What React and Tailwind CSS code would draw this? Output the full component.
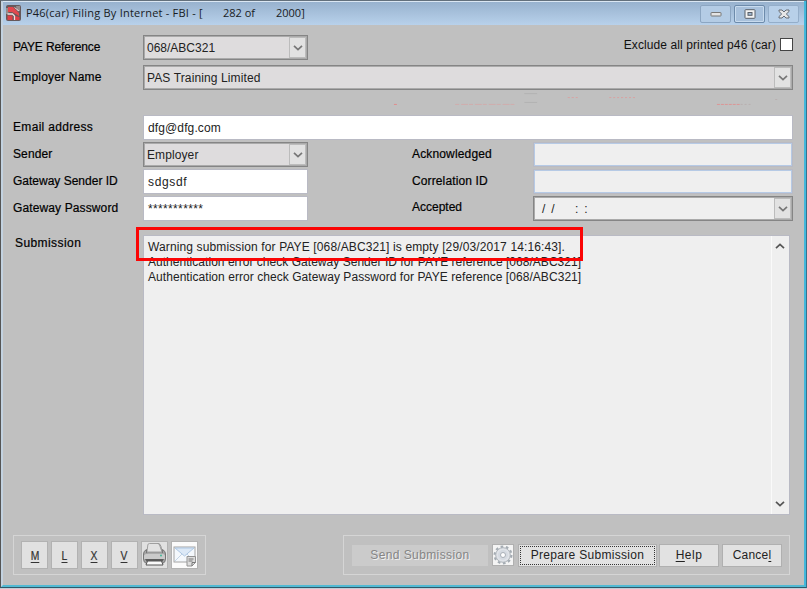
function Chevron({ className = '' }) {
    return (
        <svg className={className} width="10" height="6" viewBox="0 0 10 6" fill="none">
            <path d="M1 .8 5 4.6 9 .8" stroke="currentColor" strokeWidth="1.7" />
        </svg>
    );
}

function Label({ children, className = '' }) {
    return <span className={`block whitespace-nowrap text-[12px] leading-[14px] text-black [-webkit-text-stroke:0.2px_black] ${className}`}>{children}</span>;
}

function Combo({ children, className = '' }) {
    return (
        <div className={`flex h-[25px] items-center justify-between border border-[#858585] pl-[3px] pr-px shadow-[inset_0_0_0_1px_#aaa] ${className}`}>
            <span className="whitespace-pre text-[12px] leading-[14px] text-[#222]">{children}</span>
            <span className="flex h-[21px] w-[17px] items-center justify-center border border-[#bcbcbc] bg-[#e2e2e2] text-[#777]">
                <Chevron />
            </span>
        </div>
    );
}

function Field({ children, className = '' }) {
    return <div className={`flex items-center border border-[#b9bac4] pl-1 text-[12px] leading-[14px] text-[#222] ${className}`}>{children}</div>;
}

function TitleBar() {
    return (
        <header className="flex h-[24px] items-start justify-between border-t border-[#dbe7f3] bg-linear-to-b from-[#98b2ce] to-[#b8d1eb] pl-[3px] pr-[5px]">
            <div className="flex items-center gap-[5px] pt-[3px]">
                <svg width="15" height="16" viewBox="0 0 15 16">
                    <rect width="15" height="16" rx="2" fill="#66585a" />
                    <path d="M0 3h2.500v6H0zM10 1h4v5h-3z" fill="#958c8c" />
                    <path d="M2 2h5l6 6v3L6 7H2z" fill="#e0484e" />
                    <path d="M1.500 10.500h5V15h-5zM9 11l4.500 1v3H9z" fill="#dc3f46" />
                    <path d="M1.500 9h5l2 2v4" stroke="#efdede" strokeWidth="1.300" fill="none" />
                    <path d="M8.500 2.500 13 6" stroke="#e6d2d2" />
                </svg>
                <h1 className="whitespace-pre font-['Open_Sans','Noto_Sans',sans-serif] text-[11px] leading-[16px] text-[#181c24]">
                    <span className="inline-block w-[197px] tracking-[0.22px]">P46(car) Filing By Internet - FBI - [</span>
                    <span className="inline-block w-[53px]">282 of</span>
                    <span>2000]</span>
                </h1>
            </div>
            <div className="flex gap-[3px] pt-[3px]">
                <span className="flex h-[18px] w-[31px] items-center justify-center rounded-[2px] border border-[#8ca6c2] bg-[#b4cce5]">
                    <svg width="12" height="6" viewBox="0 0 12 6"><rect x="1" y="1.5" width="10" height="3.5" rx=".5" fill="#e4e4e4" stroke="#777" /></svg>
                </span>
                <span className="flex h-[18px] w-[31px] items-center justify-center rounded-[2px] border border-[#6d8bab] bg-[#a8c1dc] shadow-[inset_0_0_0_1px_#c8dbee]">
                    <svg width="12" height="10" viewBox="0 0 12 10"><rect x="1" y=".7" width="10" height="8.6" rx=".7" fill="#f3f3f3" stroke="#5b6068" /><rect x="4" y="3.5" width="4" height="2.8" fill="#9fb8d3" stroke="#5b6068" /></svg>
                </span>
                <span className="flex h-[18px] w-[31px] items-center justify-center rounded-[2px] border border-[#94aeca] bg-[#b8d0e9]">
                    <svg width="12" height="10" viewBox="0 0 12 10"><path d="M1 1h3l2 2 2-2h3v1.5L8.3 5 11 7.5V9H8L6 7 4 9H1V7.5L3.7 5 1 2.5z" fill="#e6e6e6" stroke="#666c74" /></svg>
                </span>
            </div>
        </header>
    );
}

function ToolButton({ children }) {
    return (
        <button className="flex h-[28px] w-[27px] items-center justify-center border border-[#b2b2b2] bg-[#e1e1e1] text-[12px] leading-[12px] text-[#333]">
            {children}
        </button>
    );
}

function KeyLetter({ children }) {
    return <span className="mt-[2px] inline-block scale-x-[.86] border-b border-[#333] leading-[12px] [-webkit-text-stroke:0.2px_#333]">{children}</span>;
}

function PrinterIcon() {
    return (
        <svg className="-mt-[2px] shrink-0" width="25" height="25" viewBox="0 0 25 25">
            <path d="M5 10 5.800 3Q6 1.500 7.500 1.500h9.500l3 8.500z" fill="#e2e2e2" stroke="#a0a0a0" />
            <path d="M15.500 1.500q3 0 3.500 3l1 5" fill="none" stroke="#999" />
            <path d="M4.500 7.500Q1.500 9 1.500 12v5q0 3.500 3 4.500h16q3-1 3-4.500v-5q0-3-3-4.500V11h-16z" fill="#a5a5a5" stroke="#777" />
            <path d="M2 13.500q1.500-2 4-2h13q3 0 4 2V17H2z" fill="#cacaca" />
            <path d="M3 17h19l-2 3H5z" fill="#5c5c5c" />
            <path d="M5.500 19h14l1.500 4H4z" fill="#fafafa" stroke="#555" />
            <circle cx="19" cy="13.500" r="1" fill="#45b99a" />
        </svg>
    );
}

function MailIcon() {
    return (
        <svg className="shrink-0" width="25" height="26" viewBox="0 0 25 26">
            <rect width="25" height="26" fill="#fbfbfb" />
            <rect x="2" y="5" width="21" height="15" fill="#f4f8fc" stroke="#a4a4a4" />
            <path d="m3 19 7-7M22 19l-7-7" stroke="#c3d4e6" />
            <path d="m3 6 9.500 8L22 6z" fill="#dce9f7" stroke="#adc7e3" />
            <path d="M15 14.500h8.500v6L20 24h-5z" fill="#ddd" stroke="#929292" />
            <path d="M16.500 17h5M16.500 19h4M20 24v-3.500h3.500" stroke="#777" fill="none" />
        </svg>
    );
}

function GearIcon() {
    return (
        <svg width="20" height="20" viewBox="0 0 20 20">
            <circle cx="10" cy="10" r="8.300" fill="none" stroke="#a4abb2" strokeWidth="2.400" strokeDasharray="2.600 2.615" />
            <circle cx="10" cy="10" r="7.300" fill="#e0e3e8" stroke="#afb5bb" />
            <circle cx="10" cy="10" r="5" fill="#d5dae1" />
            <circle cx="10" cy="10" r="2.500" fill="#fff" stroke="#a9afb6" />
        </svg>
    );
}

// faint leftovers of an erased notice between the employer and email rows
function ErasedNotice() {
    return (
        <svg className="ml-[375px]" width="410" height="16" viewBox="388 92 410 16" fill="none">
            <path d="M394 104.500h3" stroke="#e08a8a" />
            <path d="M456 104.500h60" stroke="#d6a4a4" strokeDasharray="4 2 7 1" opacity=".7" />
            <path d="M526 93.500h13M526 102.500h13" stroke="#aeaeae" opacity=".7" />
            <path d="M570 97.500h11M612 97.500h26" stroke="#dd9a9a" strokeDasharray="2 2" opacity=".8" />
            <path d="M721 104.500h23" stroke="#db9494" strokeDasharray="3 1" />
            <path d="M745 104.500h12M780 99.500h3" stroke="#b5a8a8" strokeDasharray="2 2" opacity=".7" />
        </svg>
    );
}

const button = 'flex items-center justify-center whitespace-nowrap border border-[#b0b0b0] bg-[#e2e2e2] text-[12px] leading-[14px] text-[#222]';

export default function App() {
    return (
        <div className="h-[589px] w-[807px] overflow-hidden bg-[#c3ced6] font-['Liberation_Sans',Arial,sans-serif]">
            <main className="relative h-[588px] border border-b-[#31586a] border-l-[#555] border-r-[#39718a] border-t-[#63707c]">
                <div className="h-[586px] border-b-2 border-l-2 border-r-2 border-b-[#51bad3] border-l-[#c3d2e0] border-r-[#42b8dc] bg-[#c0c0c0]">
                    <TitleBar />

                    <section className="pl-[10px] pr-[11px] pt-[10px]">
                        <div className="flex h-[30px] justify-between">
                            <div className="flex">
                                <Label className="w-[130px] pt-[5px] tracking-[-0.12px]">PAYE Reference</Label>
                                <Combo className="w-[165px] bg-[#dedcdd]">068/ABC321</Combo>
                            </div>
                            <div className="flex gap-1 pt-[3px]">
                                <span className="whitespace-nowrap text-[12px] leading-[14px] tracking-[0.1px] text-[#111]">Exclude all printed p46 (car)</span>
                                <span className="size-[13px] border border-[#444] bg-white" />
                            </div>
                        </div>
                        <div className="flex">
                            <Label className="w-[130px] shrink-0 pt-[5px] tracking-[0.2px]">Employer Name</Label>
                            <Combo className="grow bg-[#dedcdd] tracking-[0.12px]">PAS Training Limited</Combo>
                        </div>
                        <div className="flex h-[25px] items-start pt-[2px]">
                            <ErasedNotice />
                        </div>
                        <div className="flex h-[27px]">
                            <Label className="w-[130px] shrink-0 pt-[5px] tracking-[0.32px]">Email address</Label>
                            <Field className="h-[25px] grow bg-white tracking-[0.12px]">dfg@dfg.com</Field>
                        </div>
                        <div className="flex justify-between">
                            <div>
                                <div className="flex h-[27px]">
                                    <Label className="w-[130px] pt-[5px] tracking-[0.1px]">Sender</Label>
                                    <Combo className="w-[165px] bg-[#dedcdd] tracking-[0.1px]">Employer</Combo>
                                </div>
                                <div className="flex h-[27px]">
                                    <Label className="w-[130px] pt-[5px]">Gateway Sender ID</Label>
                                    <Field className="h-[25px] w-[165px] bg-white tracking-[0.65px]">sdgsdf</Field>
                                </div>
                                <div className="flex h-[27px]">
                                    <Label className="w-[130px] pt-[5px] tracking-[0.12px]">Gateway Password</Label>
                                    <Field className="h-[25px] w-[165px] bg-white tracking-[0.35px]">***********</Field>
                                </div>
                            </div>
                            <div>
                                <div className="flex h-[27px]">
                                    <Label className="w-[121px] pt-[5px] tracking-[0.15px]">Acknowledged</Label>
                                    <Field className="h-[25px] w-[260px] bg-[#efefef] shadow-[inset_0_0_0_1px_#b6cae5]" />
                                </div>
                                <div className="flex h-[27px]">
                                    <Label className="w-[121px] pt-[5px] tracking-[0.12px]">Correlation ID</Label>
                                    <Field className="h-[25px] w-[260px] bg-[#efefef] shadow-[inset_0_0_0_1px_#b6cae5]" />
                                </div>
                                <div className="flex h-[27px]">
                                    <Label className="w-[121px] pt-[4px]">Accepted</Label>
                                    <Combo className="w-[260px] bg-[#efefef]">
                                        <span className="pl-[5px] tracking-[1.3px]">/ /</span>
                                        <span className="pl-[19px] tracking-[1.3px]">: :</span>
                                    </Combo>
                                </div>
                            </div>
                        </div>
                    </section>

                    <section className="flex pl-[12px] pt-[12px]">
                        <Label className="w-[128px] pt-[1px] tracking-[0.42px]">Submission</Label>
                        <div className="flex h-[280px] w-[647px] justify-between border border-[#b9bac4] bg-[#efefef]">
                            <div className="whitespace-nowrap pl-1 pt-[4px] text-[12px] leading-[15px] text-[#222]">
                                <p className="tracking-[0.125px]">Warning submission for PAYE [068/ABC321] is empty [29/03/2017 14:16:43].</p>
                                <p className="tracking-[0.035px]">Authentication error check Gateway Sender ID for PAYE reference [068/ABC321]</p>
                                <p className="tracking-[0.055px]">Authentication error check Gateway Password for PAYE reference [068/ABC321]</p>
                            </div>
                            <div className="flex w-[18px] flex-col items-start justify-between border-l border-[#fafafa] py-[7px] pl-[3px] text-[#555]">
                                <Chevron className="rotate-180" />
                                <Chevron />
                            </div>
                        </div>
                    </section>

                    <footer className="flex justify-between pl-[10px] pr-[14px] pt-[20px]">
                        <div className="flex h-[40px] w-[193px] items-center gap-[3px] border border-[#d5d5d5] pl-[7px]">
                            <ToolButton><KeyLetter>M</KeyLetter></ToolButton>
                            <ToolButton><KeyLetter>L</KeyLetter></ToolButton>
                            <ToolButton><KeyLetter>X</KeyLetter></ToolButton>
                            <ToolButton><KeyLetter>V</KeyLetter></ToolButton>
                            <ToolButton><PrinterIcon /></ToolButton>
                            <ToolButton><MailIcon /></ToolButton>
                        </div>
                        <div className="flex h-[40px] w-[447px] items-center border border-[#d5d5d5] pl-[8px]">
                            <button className="h-[21px] w-[136px] whitespace-nowrap bg-[#cbcbcb] text-[12px] leading-[14px] tracking-[0.4px] text-[#858585] [text-shadow:1px_1px_0_#f0f0f0]">Send Submission</button>
                            <span className="ml-1 flex h-[22px] w-[22px] items-center justify-center border border-[#b0b0b0] bg-[#f4f4f4]"><GearIcon /></span>
                            <button className={`${button} ml-[4px] h-[23px] w-[139px] p-px tracking-[0.3px]`}>
                                <span className="flex h-full w-full items-center justify-center border border-dotted border-[#333]">Prepare Submission</span>
                            </button>
                            <button className={`${button} ml-[2px] h-[23px] w-[60px] tracking-[0.5px]`}><span className="underline underline-offset-2">H</span>elp</button>
                            <button className={`${button} ml-[3px] h-[23px] w-[60px] tracking-[0.2px]`}>Cance<span className="underline underline-offset-2">l</span></button>
                        </div>
                    </footer>
                </div>

                {/* highlight over the first log line */}
                <div className="absolute left-[135px] top-[226px] h-[34px] w-[447px] border-[3px] border-[#fb0505]" />
            </main>
        </div>
    );
}
